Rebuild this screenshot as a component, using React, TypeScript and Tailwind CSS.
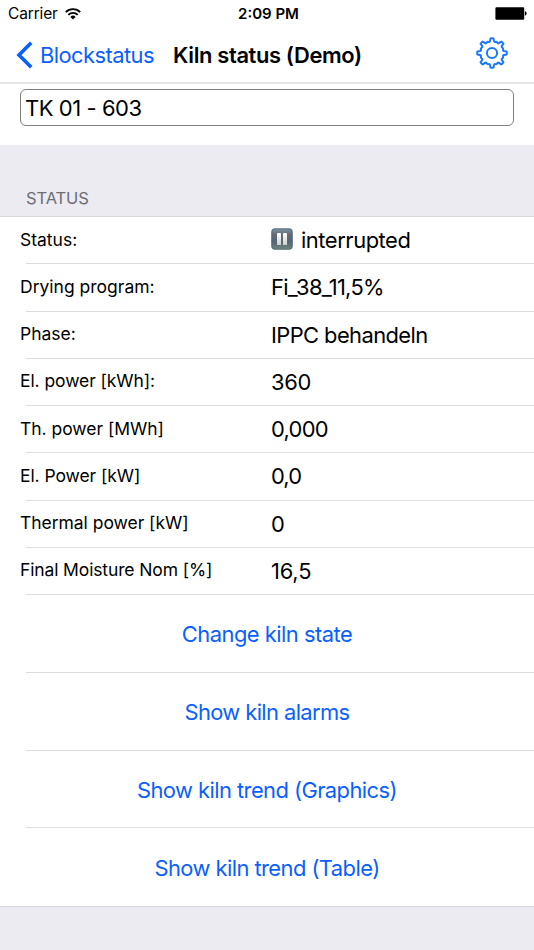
type StatusRow = {
  label: string;
  value: string;
  labelClass: string;
  valueClass: string;
  paused?: boolean;
};

const rows: StatusRow[] = [
  { label: 'Status:', value: 'interrupted', labelClass: '', valueClass: 'tracking-[-0.44px]', paused: true },
  { label: 'Drying program:', value: 'Fi_38_11,5%', labelClass: '', valueClass: 'tracking-[-0.7px]' },
  { label: 'Phase:', value: 'IPPC behandeln', labelClass: '', valueClass: 'tracking-[-0.58px]' },
  { label: 'El. power [kWh]:', value: '360', labelClass: 'tracking-[-0.08px]', valueClass: 'tracking-[-0.3px]' },
  { label: 'Th. power [MWh]', value: '0,000', labelClass: 'tracking-[-0.03px]', valueClass: 'tracking-[-0.7px]' },
  { label: 'El. Power [kW]', value: '0,0', labelClass: 'tracking-[-0.08px]', valueClass: 'tracking-[-0.9px]' },
  { label: 'Thermal power [kW]', value: '0', labelClass: 'tracking-[-0.04px]', valueClass: '' },
  { label: 'Final Moisture Nom [%]', value: '16,5', labelClass: 'tracking-[-0.13px]', valueClass: 'tracking-[-0.2px]' },
];

const actions = [
  { title: 'Change kiln state', className: 'tracking-[-0.5px]' },
  { title: 'Show kiln alarms', className: 'tracking-[-0.6px]' },
  { title: 'Show kiln trend (Graphics)', className: 'tracking-[-0.55px]' },
  { title: 'Show kiln trend (Table)', className: 'tracking-[-0.55px]' },
];

// Outline of a gear with eight rounded teeth
const gearPath = () => {
  const point = (deg: number, r: number) => {
    const a = ((deg - 90) * Math.PI) / 180;
    return `${(16 + r * Math.cos(a)).toFixed(2)} ${(16 + r * Math.sin(a)).toFixed(2)}`;
  };
  let d = `M${point(-6, 14.7)}`;
  for (let i = 0; i < 8; i++) {
    const t = i * 45;
    d += `Q${point(t, 15)} ${point(t + 6, 14.7)}`;
    d += `C${point(t + 9, 12.8)} ${point(t + 9, 10.6)} ${point(t + 18, 11.7)}`;
    d += `Q${point(t + 22.5, 12.2)} ${point(t + 27, 11.7)}`;
    d += `C${point(t + 36, 10.6)} ${point(t + 36, 12.8)} ${point(t + 39, 14.7)}`;
  }
  return `${d}Z`;
};

const GearIcon = () => (
  <svg className="h-8 w-8" viewBox="0 0 32 32" fill="none" stroke="#1a78ff" strokeWidth="2" strokeLinejoin="round">
    <path d={gearPath()} />
    <circle cx="16" cy="16" r="5.1" />
  </svg>
);

const WifiIcon = () => (
  <svg className="h-3 w-4" viewBox="0 0 16 12" fill="none" stroke="#000" strokeWidth="1.8">
    <path d="M.8 4.1a10.2 10.2 0 0 1 14.4 0" />
    <path d="M3.3 6.8a6.6 6.6 0 0 1 9.4 0" />
    <path d="M8 11.6 5.4 8.9a3.7 3.7 0 0 1 5.2 0z" fill="#000" stroke="none" />
  </svg>
);

const BatteryIcon = () => (
  <svg className="h-[13px] w-8" viewBox="0 0 32 13">
    <rect x="0.4" y="0.2" width="28.8" height="12.5" rx="1.2" />
    <path d="M29.9 4.3c1.2.3 1.7 1.2 1.7 2.2s-.5 1.9-1.7 2.2z" />
  </svg>
);

const PauseIcon = () => (
  <svg className="mr-2 mb-[3px] h-[22px] w-[22px]" viewBox="0 0 22 22">
    <defs>
      <linearGradient id="key" x1="0" y1="0" x2="0" y2="1">
        <stop offset="0" stopColor="#7894a8" />
        <stop offset="0.3" stopColor="#666a72" />
        <stop offset="0.65" stopColor="#536778" />
        <stop offset="1" stopColor="#71877c" />
      </linearGradient>
      <linearGradient id="bar" x1="0" y1="0" x2="0" y2="1">
        <stop offset="0" stopColor="#fff" />
        <stop offset="1" stopColor="#cfcfcf" />
      </linearGradient>
    </defs>
    <rect x="0.3" y="0.3" width="21.4" height="21.4" rx="3.6" fill="url(#key)" />
    <rect x="0.8" y="0.8" width="20.4" height="20.4" rx="3.2" fill="none" stroke="#43566a" strokeOpacity="0.4" />
    <rect x="6" y="5" width="4" height="12" rx="0.4" fill="url(#bar)" />
    <rect x="12" y="5" width="4" height="12" rx="0.4" fill="url(#bar)" />
  </svg>
);

export default function App() {
  return (
    <div className="flex h-[950px] w-[534px] flex-col overflow-hidden bg-[#ebebf1] font-['Inter',sans-serif] text-black">
      <header className="h-[84px] shrink-0 border-b-2 border-[#e6e6e6] bg-white">
        <div className="grid h-[27px] grid-cols-3 items-center pr-[7px] pl-2">
          <div className="flex items-center gap-[7px]">
            <span className="pt-px text-[15.5px] tracking-[-0.15px]">Carrier</span>
            <WifiIcon />
          </div>
          <span className="pt-px pl-0.5 text-center text-[15px] font-semibold">2:09 PM</span>
          <div className="flex justify-end">
            <BatteryIcon />
          </div>
        </div>
        <div className="flex h-[55px] items-center pl-4">
          <svg className="h-7 w-[18px]" viewBox="0 0 18 28" fill="none" stroke="#0a60ff" strokeWidth="3.6">
            <path d="M15.2 1.8 3 14l12.2 12.2" />
          </svg>
          <span className="ml-[6px] w-[133px] pt-px text-[21.9px] tracking-[-0.55px] text-[#0a60ff]">Blockstatus</span>
          <h1 className="pt-px text-[21.9px] font-semibold tracking-[-0.35px] whitespace-nowrap">Kiln status (Demo)</h1>
          <button className="mr-[26px] mb-[3px] ml-auto">
            <GearIcon />
          </button>
        </div>
      </header>

      <div className="h-[61px] shrink-0 bg-white px-5 pt-[5px]">
        <div className="flex h-[37px] items-center rounded-[6px] border border-[#808080] pt-0.5 pl-1 text-[22px] tracking-[-0.45px]">
          TK 01 - 603
        </div>
      </div>

      <div className="flex h-[72px] shrink-0 items-end border-b border-[#d6d6dc] pb-[5px] pl-[26px] text-[16.5px] tracking-[-0.1px] text-[#6d6d72]">
        STATUS
      </div>

      <div className="shrink-0 border-b border-[#d6d6dc] bg-white">
        {rows.map((row) => (
          <div key={row.label} className="relative flex h-[47.25px] items-center pl-5">
            <span className={`w-[251px] pb-[2px] text-[17.5px] whitespace-nowrap ${row.labelClass}`}>{row.label}</span>
            <div className={`flex items-center text-[21.9px] whitespace-nowrap ${row.valueClass}`}>
              {row.paused && <PauseIcon />}
              {row.value}
            </div>
            <div className="absolute right-0 bottom-0 left-[26px] h-px bg-[#dededf]" />
          </div>
        ))}
        {actions.map((action, index) => (
          <div key={action.title} className="relative flex h-[77.8px] items-center justify-center pt-[1.5px] text-[21.9px] text-[#0a60ff]">
            <span className={action.className}>{action.title}</span>
            {index < actions.length - 1 && <div className="absolute right-0 bottom-0 left-[26px] h-px bg-[#dededf]" />}
          </div>
        ))}
      </div>
    </div>
  );
}
